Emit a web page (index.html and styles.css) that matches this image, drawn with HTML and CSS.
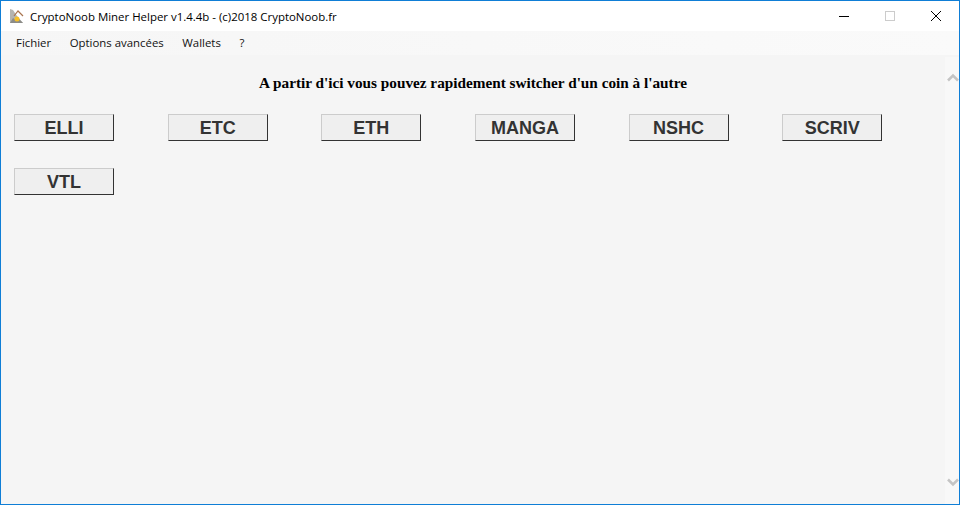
FILE: index.html
```html
<!DOCTYPE html>
<html lang="fr">
<head>
    <meta charset="UTF-8">
    <title>CryptoNoob Miner Helper</title>
    <link rel="stylesheet" href="styles.css">
</head>
<body>
    <div class="window">
        <header class="titlebar">
            <svg class="app-icon" width="16" height="16" viewBox="0 0 16 16">
                <path d="M1 1l3 1 4 6 6 7H1z" fill="#b4b4b0"/>
                <path d="M1 15l3-5 3 2 3-1 4 4z" fill="#8c8c88"/>
                <path d="M5 8l4-5 5 5" fill="none" stroke="#a9744f" stroke-width="1.2"/>
                <circle cx="8" cy="11" r="2.5" fill="#f7bf26"/>
            </svg>
            <span class="title">CryptoNoob Miner Helper v1.4.4b - (c)2018 CryptoNoob.fr</span>
            <div class="controls">
                <span class="ctrl">
                    <svg width="10" height="10" viewBox="0 0 10 10"><path d="M0 5.5h10" stroke="#000"/></svg>
                </span>
                <span class="ctrl">
                    <svg width="10" height="10" viewBox="0 0 10 10"><rect x="0.5" y="0.5" width="9" height="9" fill="none" stroke="#ccc"/></svg>
                </span>
                <span class="ctrl">
                    <svg width="10" height="10" viewBox="0 0 10 10"><path d="M0 0l10 10M10 0L0 10" stroke="#000"/></svg>
                </span>
            </div>
        </header>

        <nav class="menubar">
            <a href="#">Fichier</a>
            <a href="#">Options avancées</a>
            <a href="#">Wallets</a>
            <a href="#">?</a>
        </nav>

        <div class="content">
            <main class="main">
                <h1>A partir d'ici vous pouvez rapidement switcher d'un coin à l'autre</h1>
                <div class="coins">
                    <button class="coin">ELLI</button>
                    <button class="coin">ETC</button>
                    <button class="coin">ETH</button>
                    <button class="coin">MANGA</button>
                    <button class="coin">NSHC</button>
                    <button class="coin">SCRIV</button>
                    <button class="coin">VTL</button>
                </div>
            </main>
            <div class="scrollbar">
                <svg width="14" height="9" viewBox="0 0 14 9"><path d="M3 7.5l5-5 5 5" fill="none" stroke="#c4c4c4" stroke-width="2.5"/></svg>
                <svg width="14" height="9" viewBox="0 0 14 9"><path d="M3 1.5l5 5 5-5" fill="none" stroke="#c4c4c4" stroke-width="2.5"/></svg>
            </div>
        </div>
    </div>
</body>
</html>
```

FILE: styles.css
```css
* {
    margin: 0;
    padding: 0;
    box-sizing: border-box;
}

html, body {
    height: 100%;
    overflow: hidden;
}

/* Window */
.window {
    height: 505px;
    width: 960px;
    display: flex;
    flex-direction: column;
    border: 1px solid #0f7ed6;
    background-color: #f5f5f5;
}

/* Title bar */
.titlebar {
    height: 30px;
    flex: none;
    display: flex;
    align-items: center;
    padding-left: 8px;
    background-color: #fff;
}

.app-icon {
    flex: none;
}

.title {
    margin-left: 5px;
    font-family: "Open Sans", sans-serif;
    font-size: 11.45px;
    color: #000;
    white-space: nowrap;
}

.controls {
    display: flex;
    margin-left: auto;
}

.ctrl {
    width: 46px;
    height: 30px;
    display: flex;
    align-items: center;
    justify-content: center;
}

/* Menu */
.menubar {
    height: 24px;
    flex: none;
    display: flex;
    align-items: center;
    gap: 18.6px;
    padding: 0 0 2px 15px;
    background: linear-gradient(to right, #f6f6f6, #fafafa);
}

.menubar a {
    font-family: "Open Sans", sans-serif;
    font-size: 11.4px;
    color: #111;
    text-decoration: none;
}

/* Content */
.content {
    flex: 1;
    display: flex;
    min-height: 0;
}

.main {
    flex: 1;
    padding: 19px 0 0 13px;
}

.main h1 {
    width: 918px;
    font-family: "Liberation Serif", serif;
    font-size: 15.25px;
    font-weight: bold;
    line-height: 18px;
    text-align: center;
    color: #000;
}

.coins {
    display: grid;
    grid-template-columns: repeat(6, 100px);
    column-gap: 53.67px;
    row-gap: 27px;
    margin-top: 22px;
}

.coin {
    height: 27px;
    padding-top: 2px;
    font-family: "Liberation Sans", sans-serif;
    font-size: 18px;
    font-weight: bold;
    color: #333;
    background-color: #efefef;
    border: 1px solid;
    border-color: #ccc #333 #333 #ccc;
}

.scrollbar {
    width: 14px;
    flex: none;
    margin-top: 2px;
    padding: 16px 0 17px;
    display: flex;
    flex-direction: column;
    justify-content: space-between;
    background-color: #f8f8f8;
}

.scrollbar svg {
    display: block;
}
```
